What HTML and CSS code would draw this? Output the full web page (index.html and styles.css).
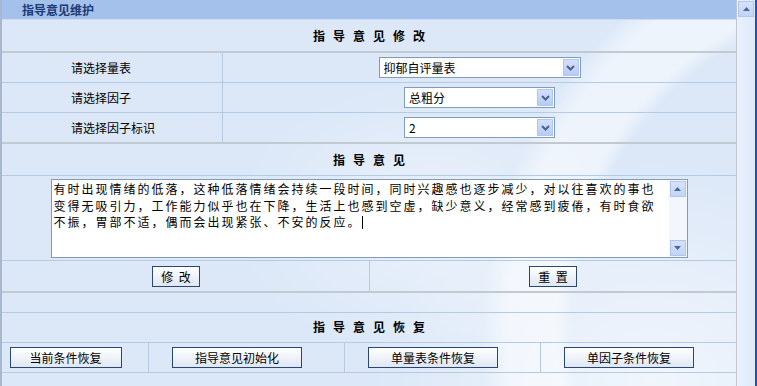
FILE: index.html
```html
<!DOCTYPE html>
<html lang="zh-CN">
<head>
<meta charset="utf-8">
<title>指导意见维护</title>
<link rel="stylesheet" href="styles.css">
</head>
<body>
<div class="page">
  <div class="main">
    <div class="hdr">指导意见维护</div>
    <div class="title">指导意见修改</div>
    <div class="thick"></div>

    <div class="row">
      <div class="lbl">请选择量表</div>
      <div class="val">
        <div class="select w200"><span class="sel-text">抑郁自评量表</span><i class="dd"><svg width="9" height="6" viewBox="0 0 9 6"><path d="M1 1 L4.5 4.5 L8 1" fill="none" stroke="#4d6185" stroke-width="2"/></svg></i></div>
      </div>
    </div>
    <div class="row">
      <div class="lbl">请选择因子</div>
      <div class="val">
        <div class="select w150"><span class="sel-text">总粗分</span><i class="dd"><svg width="9" height="6" viewBox="0 0 9 6"><path d="M1 1 L4.5 4.5 L8 1" fill="none" stroke="#4d6185" stroke-width="2"/></svg></i></div>
      </div>
    </div>
    <div class="row last">
      <div class="lbl">请选择因子标识</div>
      <div class="val">
        <div class="select w150"><span class="sel-text">2</span><i class="dd"><svg width="9" height="6" viewBox="0 0 9 6"><path d="M1 1 L4.5 4.5 L8 1" fill="none" stroke="#4d6185" stroke-width="2"/></svg></i></div>
      </div>
    </div>
    <div class="thick"></div>

    <div class="title bordered">指导意见</div>
    <div class="tarow">
      <div class="ta">
        <div class="ta-text">有时出现情绪的低落，这种低落情绪会持续一段时间，同时兴趣感也逐步减少，对以往喜欢的事也变得无吸引力，工作能力似乎也在下降，生活上也感到空虚，缺少意义，经常感到疲倦，有时食欲不振，胃部不适，偶而会出现紧张、不安的反应。<span class="caret"></span></div>
        <div class="ta-sb">
          <span class="sbb"><svg width="7" height="4" viewBox="0 0 7 4"><path d="M0 4 L3.5 0 L7 4 Z" fill="#4d6a9c"/></svg></span>
          <span class="sbb"><svg width="7" height="4" viewBox="0 0 7 4"><path d="M0 0 L3.5 4 L7 0 Z" fill="#4d6a9c"/></svg></span>
        </div>
      </div>
    </div>
    <div class="btnrow">
      <div class="cell c-left shift"><button class="btn b48">修 改</button></div>
      <div class="cell c-right"><button class="btn b48">重 置</button></div>
    </div>
    <div class="thick"></div>
    <div class="empty"></div>
    <div class="title bordered t3">指导意见恢复</div>
    <div class="btnrow4">
      <div class="cell c1 shift"><button class="btn b112">当前条件恢复</button></div>
      <div class="cell c2 shift"><button class="btn b130">指导意见初始化</button></div>
      <div class="cell c2 shift"><button class="btn b130">单量表条件恢复</button></div>
      <div class="cell c4 shift"><button class="btn b130">单因子条件恢复</button></div>
    </div>
  </div>
  <div class="vscroll">
    <span class="sbup"><svg width="7" height="4" viewBox="0 0 7 4"><path d="M0 4 L3.5 0 L7 4 Z" fill="#4d6a9c"/></svg></span>
  </div>
  <div class="edge"></div>
</div>
</body>
</html>
```

FILE: styles.css
```css
* { box-sizing: border-box; }
html, body { margin: 0; padding: 0; }
body {
  font-family: "Noto Sans CJK SC", "Liberation Sans", sans-serif;
  font-size: 12px;
  color: #000;
  background: #dde9f9;
}
.page {
  display: flex;
  width: 757px;
  height: 386px;
  overflow: hidden;
}
.main {
  width: 737px;
  height: 386px;
  border-left: 2px solid #a5b7d1;
  border-right: 1px solid #c3c7cc;
  background-color: #dce8f8;
  background-image:
    radial-gradient(circle at 900px 330px, rgba(255,255,255,0) 330px, rgba(255,255,255,0.5) 345px, rgba(255,255,255,0.5) 395px, rgba(255,255,255,0) 420px),
    radial-gradient(ellipse 280px 220px at 650px 380px, rgba(255,255,255,0.6), rgba(255,255,255,0) 100%),
    radial-gradient(ellipse 200px 140px at 430px 220px, rgba(255,255,255,0.4), rgba(255,255,255,0) 100%);
}
.hdr {
  height: 20px;
  line-height: 19px;
  padding-left: 20px;
  background: #a3c1ea;
  border-bottom: 1px solid #cfdcf0;
  color: #1c3b76;
  font-weight: bold;
  font-size: 12px;
}
.title {
  height: 31px;
  line-height: 31px;
  text-align: center;
  font-weight: bold;
  letter-spacing: 8px;
  padding-left: 8px;
}
.title.bordered {
  height: 32px;
  border-bottom: 1px solid #b5cbe4;
}
.title.t3 {
  height: 30px;
  line-height: 27px;
}
.thick {
  height: 2px;
  background: #c3c9d0;
}
.row {
  display: flex;
  height: 30px;
  border-bottom: 1px solid #b5cbe4;
}
.row.last { height: 29px; border-bottom: 0; }
.lbl {
  width: 221px;
  border-right: 1px solid #b5cbe4;
  padding-left: 69px;
  display: flex;
  align-items: center;
}
.val {
  flex: 1;
  display: flex;
  align-items: center;
  justify-content: center;
}
.select {
  height: 21px;
  border: 1px solid #7f9db9;
  background: #fff;
  display: flex;
  align-items: center;
  justify-content: space-between;
  padding: 1px;
}
.w200 { width: 202px; }
.w150 { width: 151px; }
.sel-text { padding-left: 3px; line-height: 17px; }
.dd {
  width: 16px;
  height: 17px;
  border: 1px solid #b3c6f1;
  background: linear-gradient(#d3e0fd, #b8cbf5);
  display: flex;
  align-items: center;
  justify-content: center;
}
.tarow {
  height: 85px;
  border-bottom: 1px solid #b5cbe4;
  display: flex;
  justify-content: center;
  padding-top: 3px;
}
.ta {
  width: 637px;
  height: 79px;
  border: 1px solid #7f9db9;
  background: #fff;
  display: flex;
  justify-content: space-between;
}
.ta-text {
  width: 612px;
  padding: 1px 0 0 2px;
  line-height: 16.5px;
  letter-spacing: 2px;
  font-size: 12px;
}
.caret {
  display: inline-block;
  width: 1px;
  height: 13px;
  background: #000;
  vertical-align: -2px;
}
.ta-sb {
  width: 18px;
  background: #f3f6fd;
  display: flex;
  flex-direction: column;
  justify-content: space-between;
  padding: 1px;
}
.sbb, .sbup {
  width: 16px;
  height: 16px;
  border: 1px solid #b2c5ec;
  background: linear-gradient(#d6e2fb, #c2d4f6);
  display: flex;
  align-items: center;
  justify-content: center;
}
.btnrow, .btnrow4 {
  display: flex;
  height: 30px;
}
.btnrow4 { border-bottom: 1px solid #b5cbe4; }
.cell {
  display: flex;
  align-items: center;
  justify-content: center;
}
.cell.shift { padding-right: 19px; }
.c-left { width: 368px; border-right: 1px solid #b5cbe4; }
.c-right { flex: 1; }
.c1 { width: 147px; border-right: 1px solid #b5cbe4; }
.c2 { width: 196px; border-right: 1px solid #b5cbe4; }
.c4 { flex: 1; }
.btn {
  height: 21px;
  border: 1px solid #2a4672;
  background: linear-gradient(#ffffff, #dfe7f3);
  font-family: "Noto Sans CJK SC", "Liberation Sans", sans-serif;
  font-size: 12px;
  color: #000;
  padding: 0;
  line-height: 19px;
}
.b48 { width: 48px; word-spacing: 3px; }
.b112 { width: 112px; }
.b130 { width: 130px; }
.empty {
  height: 20px;
  border-bottom: 1px solid #b5cbe4;
}
.vscroll {
  width: 18px;
  height: 386px;
  background: linear-gradient(to right, #e9f1fd, #dfe9fb);
  padding: 1px 1px 0 1px;
}
.edge {
  width: 2px;
  height: 386px;
  background: #1a52c8;
}
```
